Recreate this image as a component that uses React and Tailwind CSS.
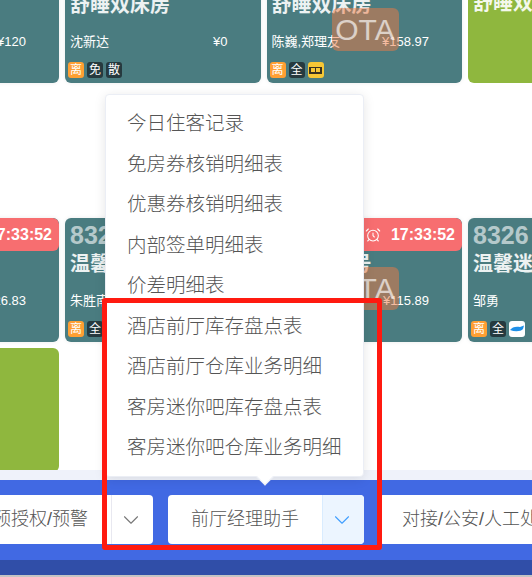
import { AlarmClock, ChevronDown } from 'lucide-react';

const rows = [
  [
    { name: '舒睡双床房', guest: '', price: '¥120', tags: ['离', '全'] },
    { name: '舒睡双床房', guest: '沈新达', price: '¥0', tags: ['离', '免', '散'] },
    { name: '舒睡双床房', guest: '陈巍,郑理友', price: '¥158.97', tags: ['离', '全', 'mt'], ota: true },
    { name: '舒睡双床房', green: true },
  ],
  [
    { timer: true, name: '', guest: '', price: '¥126.83', tags: ['离', '全'] },
    { no: '8326', name: '温馨迷你房', guest: '朱胜南', price: '', tags: ['离', '全'] },
    { timer: true, name: '温馨迷你号', guest: '', price: '¥115.89', tags: ['离', '全'], ota: true },
    { no: '8326', name: '温馨迷你房', guest: '邹勇', price: '', tags: ['离', '全', 'fish'] },
  ],
  [{ green: true }],
];

const menu = [
  '今日住客记录',
  '免房券核销明细表',
  '优惠券核销明细表',
  '内部签单明细表',
  '价差明细表',
  '酒店前厅库存盘点表',
  '酒店前厅仓库业务明细',
  '客房迷你吧库存盘点表',
  '客房迷你吧仓库业务明细',
];

function Tag({ t }) {
  if (t === 'fish') {
    return (
      <span className="w-4 h-4 rounded-[3px] bg-white flex items-center justify-center">
        <svg viewBox="0 0 16 16" className="w-4 h-4">
          <path d="M1 9C3 6 7 5 11 6L15 4.5 14 8C12 10.5 6 11 1 9Z" fill="#1e90e8" />
        </svg>
      </span>
    );
  }
  if (t === 'mt') {
    return (
      <span className="w-4 h-4 rounded-[3px] bg-[#f7c735] flex items-center justify-center">
        <span className="w-[13px] h-[7px] bg-[#3a3320] flex items-center justify-center gap-[1px]">
          <span className="w-[4px] h-[4px] bg-[#f7c735]" />
          <span className="w-[4px] h-[4px] bg-[#f7c735]" />
        </span>
      </span>
    );
  }
  const bg = t === '离' ? 'bg-[#ff9f33]' : 'bg-[#263a3f]';
  return (
    <span className={`${bg} w-4 h-4 rounded-[3px] flex items-center justify-center text-[12px] leading-none text-white`}>{t}</span>
  );
}

function Card({ c }) {
  if (c.green) {
    return (
      <div className="h-[124px] rounded-[6px] bg-[#8fb73e] pt-[30px] px-[5px] overflow-hidden">
        <div className="text-[20px] leading-[28px] font-bold text-white/90 whitespace-nowrap">{c.name}</div>
      </div>
    );
  }
  return (
    <div className="relative h-[124px] rounded-[6px] bg-[#4a7c80] shadow-[0_0_4px_rgba(0,0,0,0.08)] flex flex-col overflow-hidden">
      {c.timer ? (
        <div className="h-[33px] rounded-[6px] bg-[#f76e70] flex items-center justify-end gap-[10px] pr-[7px] text-white text-[16px] font-bold">
          <AlarmClock className="w-4 h-4" strokeWidth={1.6} />
          17:33:52
        </div>
      ) : (
        <div className="h-[33px] pl-[5px] pt-[2px] text-[25px] leading-[31px] font-bold text-white/60">{c.no}</div>
      )}
      <div className="h-[28px] mt-[-1px] pl-[5px] text-[20px] leading-[28px] font-bold text-white/90 whitespace-nowrap">{c.name}</div>
      <div className="flex h-[20px] mt-[13px] pl-[5px] pr-[33px] justify-between items-center text-[13px] text-white whitespace-nowrap">
        <span>{c.guest}</span>
        <span>{c.price}</span>
      </div>
      <div className="flex gap-[3px] pl-[3px] mt-[10px]">
        {c.tags.map((t, i) => <Tag key={i} t={t} />)}
      </div>
      {c.ota && (
        <div className="absolute left-[65px] top-[49px] w-[67px] h-[43px] rounded-[6px] bg-[#ee7a44]/50 text-white/65 text-[30px] leading-[43px] text-center">OTA</div>
      )}
    </div>
  );
}

function SplitButton({ text, active }) {
  return (
    <div className="shrink-0 h-[49px] flex rounded-[4px] bg-white overflow-hidden">
      <div className="px-[23px] flex items-center text-[18px] font-light text-[#555] whitespace-nowrap">{text}</div>
      <div className={`w-[42px] pr-[3px] flex items-center justify-center border-l ${active ? 'bg-[#ecf5ff] border-[#d9ecff] text-[#409eff]' : 'border-[#e8e8f0] text-[#777]'}`}>
        <ChevronDown className="w-[26px] h-[26px]" strokeWidth={1} />
      </div>
    </div>
  );
}

export default function App() {
  return (
    <div className="relative w-[532px] h-[577px] overflow-hidden bg-white font-['Liberation_Sans','Noto_Sans_CJK_SC',sans-serif]">
      <div className="h-[470px] overflow-hidden">
        <div className="flex flex-col mt-[-41px] ml-[-136.5px] w-[812px]">
          {rows.map((row, i) => (
            <div key={i} className={`grid grid-cols-[repeat(4,195.5px)] gap-[6px] ${i === 1 ? 'mt-[135px]' : i === 2 ? 'mt-[6px]' : ''}`}>
              {row.map((c, j) => <Card key={j} c={c} />)}
            </div>
          ))}
        </div>
      </div>

      <div className="h-[10px] bg-[#eff2fa]" />
      <div className="h-[80px] bg-[#4169e3] pt-[15px] overflow-hidden">
        <div className="flex gap-[15px] ml-[-30px]">
          <SplitButton text="预授权/预警" />
          <SplitButton text="前厅经理助手" active />
          <SplitButton text="对接/公安/人工处理" />
        </div>
      </div>
      <div className="h-[15px] bg-[#304ea8]" />
      <div className="h-[2px] bg-[#c4c4c4]" />

      {/* 下拉菜单 */}
      <div className="absolute left-[105px] top-[94px] w-[259px] h-[383px] bg-white rounded-[4px] border border-[#ebeef5] shadow-[0_2px_12px_rgba(0,0,0,0.1)] pt-[8px] pl-[21px]">
        {menu.map((m) => (
          <div key={m} className="h-[40.5px] leading-[40.5px] text-[19.5px] font-light text-[#555] whitespace-nowrap">{m}</div>
        ))}
        <div className="absolute left-[153px] bottom-[-7px] w-3 h-3 bg-white border-r border-b border-[#ebeef5] rotate-45" />
      </div>

      {/* 红色标注框 */}
      <div className="absolute left-[102px] top-[298px] w-[280px] h-[252px] border-[5px] border-[#ff1a10] rounded-[3px]" />
    </div>
  );
}
